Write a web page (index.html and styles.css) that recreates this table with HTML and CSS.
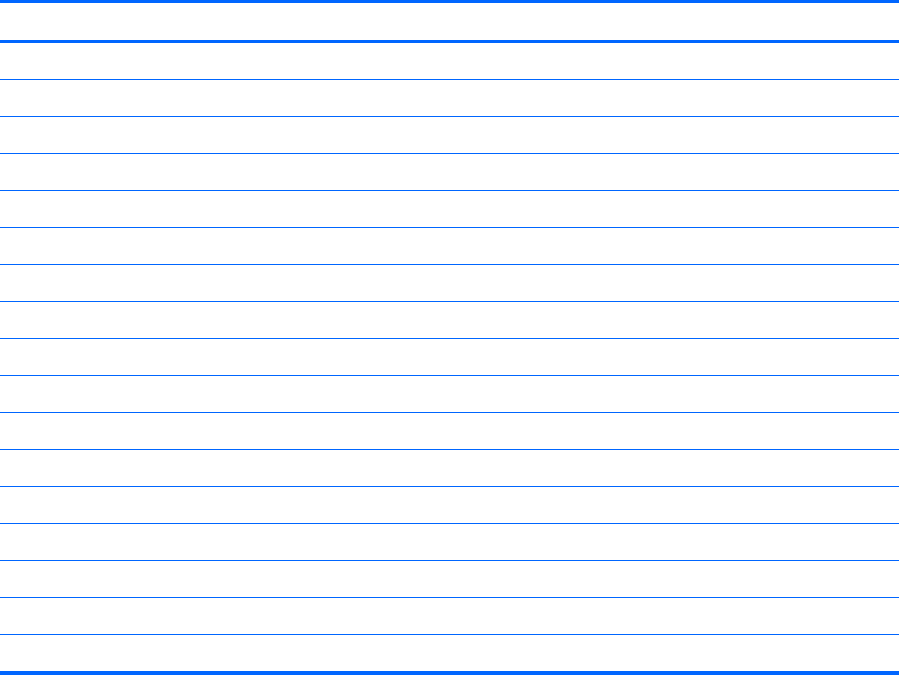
FILE: index.html
```html
<!DOCTYPE html>
<html lang="en">
<head>
  <meta charset="UTF-8" />
  <title>Table</title>
  <link rel="stylesheet" href="styles.css">
</head>
<body>
  <div class="tabla">
    <div class="cabecera"></div>
    <div class="fila"></div>
    <div class="fila"></div>
    <div class="fila"></div>
    <div class="fila"></div>
    <div class="fila"></div>
    <div class="fila"></div>
    <div class="fila"></div>
    <div class="fila"></div>
    <div class="fila"></div>
    <div class="fila"></div>
    <div class="fila"></div>
    <div class="fila"></div>
    <div class="fila"></div>
    <div class="fila"></div>
    <div class="fila"></div>
    <div class="fila"></div>
    <div class="fila"></div>
  </div>
</body>
</html>
```

FILE: styles.css
```css
body {
  margin: 0;
  background-color: white;
  font-family: "Liberation Sans", Arial, sans-serif;
}
.tabla {
  width: 899px;
  border-top: 3px solid #0066ff;
  border-bottom: 4px solid #0066ff;
}
.cabecera {
  height: 37px;
  border-bottom: 3px solid #0066ff;
}
.fila {
  height: 36px;
  border-bottom: 1px solid #0066ff;
}
.fila:last-child {
  border-bottom: none;
}
```
